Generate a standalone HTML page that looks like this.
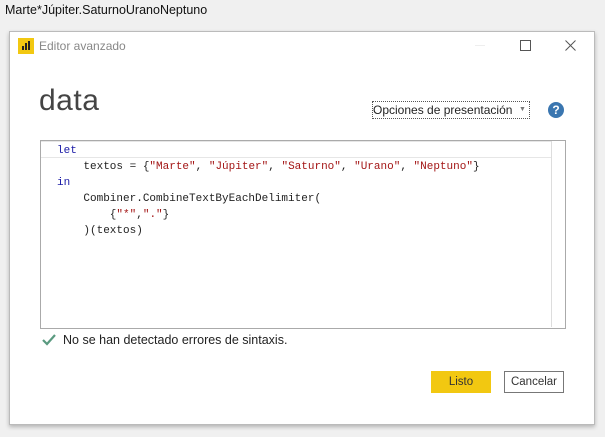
<!DOCTYPE html>
<html><head><style>
body{margin:0;width:605px;height:437px;background:#f0f0f0;position:relative;overflow:hidden;font-family:"Segoe UI","Liberation Sans",sans-serif}
.a{position:absolute;white-space:nowrap}
.code{font-family:Consolas,"Liberation Mono",monospace;font-size:11px;color:#222;white-space:pre;line-height:16px}
.k{color:#1a1aa6}.s{color:#a31515}
</style></head><body>
<div class="a" style="left:5px;top:3px;font-size:12.5px;color:#111">Marte*Júpiter.SaturnoUranoNeptuno</div>
<div class="a" style="left:9px;top:31px;width:584px;height:392px;background:#fff;border:1px solid #bbb;box-shadow:0 2px 4px rgba(0,0,0,.25)"></div>
<div class="a" style="left:18px;top:38px;width:16px;height:16px;background:#f2c811"></div>
<div class="a" style="left:22px;top:46px;width:2px;height:4px;background:#222"></div>
<div class="a" style="left:25px;top:43px;width:2px;height:7px;background:#222"></div>
<div class="a" style="left:28px;top:41px;width:2px;height:9px;background:#222"></div>
<div class="a" style="left:39px;top:39px;font-size:12px;color:#888">Editor avanzado</div>
<div class="a" style="left:475px;top:45px;width:10px;height:1px;background:#eee"></div>
<div class="a" style="left:520px;top:40px;width:9px;height:9px;border:1px solid #555"></div>
<svg class="a" style="left:565px;top:40px" width="11" height="11"><path d="M0.5 0.5L10.5 10.5M10.5 0.5L0.5 10.5" stroke="#555" stroke-width="1"/></svg>
<div class="a" style="left:39px;top:84px;font-size:30px;color:#444;font-weight:300;letter-spacing:0.5px">data</div>
<div class="a" style="left:372px;top:101px;width:156px;height:16px;border:1px dotted #555;font-size:12px;color:#222;line-height:16px">Opciones de presentación<span style="position:absolute;left:146px;top:0;font-size:7px;color:#777">▼</span></div>
<div class="a" style="left:548px;top:102px;width:16px;height:16px;border-radius:50%;background:#3a76b0;color:#fff;font-size:12px;font-weight:bold;text-align:center;line-height:16px">?</div>
<div class="a" style="left:40px;top:140px;width:524px;height:187px;border:1px solid #aaa;background:#fff"></div>
<div class="a" style="left:41px;top:141px;width:510px;height:15px;border:1px solid #e6e6e6;border-left:none"></div>
<div class="a" style="left:551px;top:141px;width:1px;height:186px;background:#ddd"></div>
<div class="a code" style="left:57px;top:143px"><span class="k">let</span>
    textos = {<span class="s">"Marte"</span>, <span class="s">"Júpiter"</span>, <span class="s">"Saturno"</span>, <span class="s">"Urano"</span>, <span class="s">"Neptuno"</span>}
<span class="k">in</span>
    Combiner.CombineTextByEachDelimiter(
        {<span class="s">"*"</span>,<span class="s">"."</span>}
    )(textos)</div>
<svg class="a" style="left:42px;top:334px" width="14" height="12"><path d="M1 6L5 10L13 1" stroke="#5a9a80" stroke-width="2.2" fill="none"/></svg>
<div class="a" style="left:63px;top:333px;font-size:12.5px;color:#222">No se han detectado errores de sintaxis.</div>
<div class="a" style="left:431px;top:371px;width:60px;height:22px;background:#f2c811;font-size:11.5px;color:#333;text-align:center;line-height:22px">Listo</div>
<div class="a" style="left:504px;top:371px;width:58px;height:20px;border:1px solid #777;font-size:11.5px;color:#333;text-align:center;line-height:20px">Cancelar</div>
</body></html>
